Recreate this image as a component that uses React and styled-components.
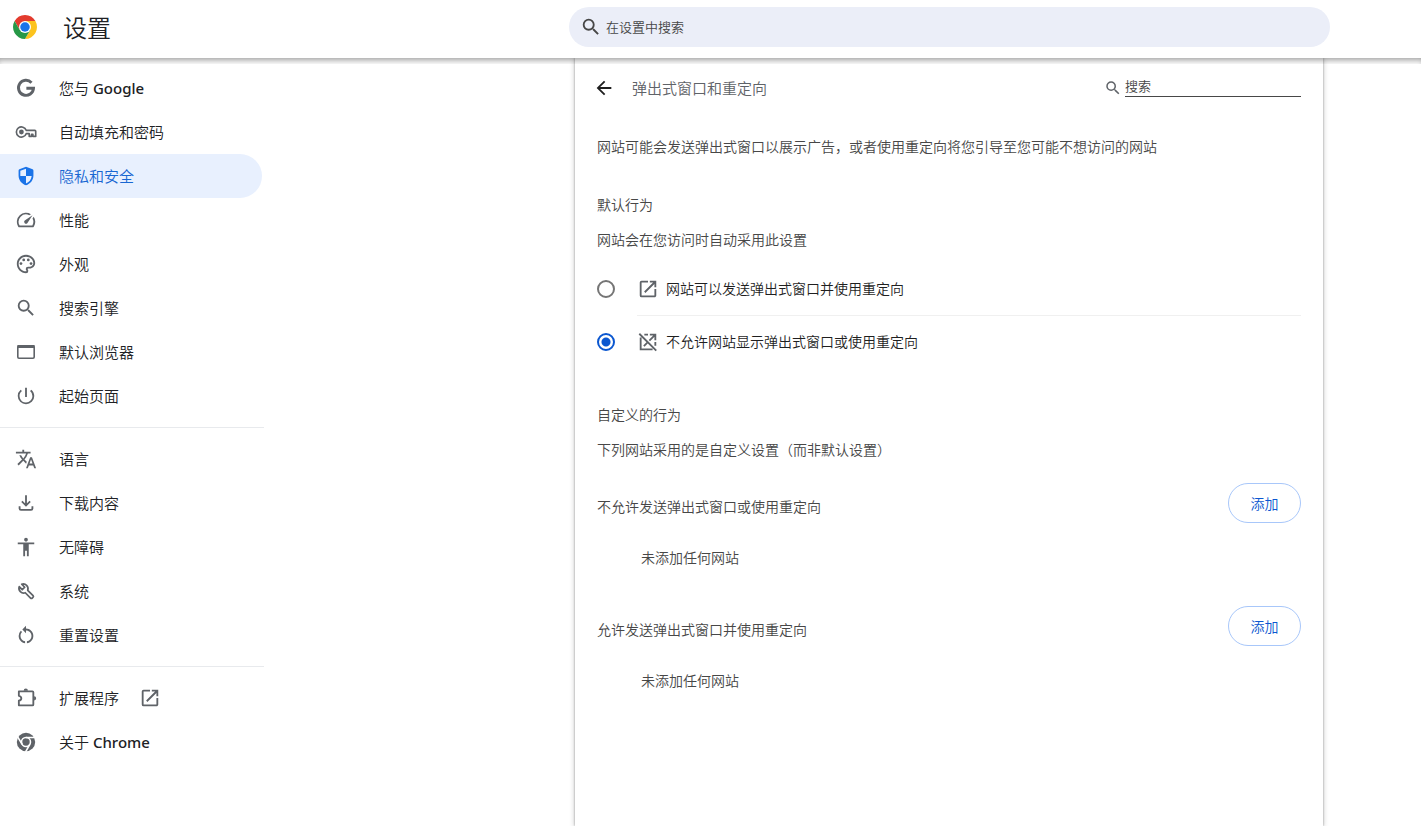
import React, { useState } from 'react';
import { styled, css, createGlobalStyle } from 'styled-components';
import {
  MdAccessibility,
  MdArrowBack,
  MdOpenInNew,
  MdOutlinePalette,
  MdOutlineSpeed,
  MdPowerSettingsNew,
  MdRestartAlt,
  MdSearch,
  MdTranslate
} from 'react-icons/md';

const GoogleIcon = () => (
  <svg viewBox="0 0 24 24" fill="none" stroke="currentColor" strokeWidth="3.2">
    <path d="M18 6.200A8.200 8.200 0 1 0 20.200 12.200H12.400" />
  </svg>
);

const KeyIcon = () => (
  <svg viewBox="0 0 24 24" fill="none" stroke="currentColor" strokeWidth="1.8">
    <path d="M12.200 10.200A5.500 5.500 0 1 0 12.200 13.800H15.500V16.800H18V14.500H19.500V16.800H22.600V11.200a1 1 0 0 0-1-1z" strokeLinejoin="round" />
    <circle cx="7" cy="12" r="2.600" fill="currentColor" stroke="none" />
  </svg>
);

const ShieldIcon = () => (
  <svg viewBox="0 0 24 24" fill="currentColor">
    <path d="M12 2 4.800 4.700A1.500 1.500 0 0 0 3.900 6v5.500c0 4.900 3.400 9.400 8.100 10.600 4.700-1.200 8.100-5.700 8.100-10.600V6a1.500 1.500 0 0 0-.9-1.300zM12 4.100V12h6.200c-.4 3.800-2.900 7-6.200 8.100V12H5.800V6.400z" />
  </svg>
);

const WindowIcon = () => (
  <svg viewBox="0 0 22 22" fill="none" stroke="currentColor">
    <rect x="2.800" y="4.800" width="16.400" height="12.400" rx="1.200" strokeWidth="1.600" />
    <path d="M2.500 5.500h17" strokeWidth="3" />
  </svg>
);

const DownloadIcon = () => (
  <svg viewBox="0 0 24 24" fill="none" stroke="currentColor" strokeWidth="2">
    <path d="M12 3.500v11M7.500 10.300l4.500 4.500 4.500-4.500M5 15.500v2.500a1.500 1.500 0 0 0 1.500 1.500h11a1.500 1.500 0 0 0 1.500-1.500v-2.500" />
  </svg>
);

const WrenchIcon = () => (
  <svg viewBox="0 0 24 24" fill="none" stroke="currentColor" strokeWidth="1.900" strokeLinejoin="round">
    <path d="M7.300 4.600a5.200 5.200 0 0 1 6.600 6.600l5.800 5.800a1.300 1.300 0 0 1 0 1.800l-.9.900a1.300 1.300 0 0 1-1.800 0l-5.800-5.800a5.200 5.200 0 0 1-6.600-6.600l3.300 3.300 2.700-2.700z" />
  </svg>
);

const ExtensionIcon = () => (
  <svg viewBox="0 0 24 24" fill="none" stroke="currentColor" strokeWidth="2">
    <path d="M4.200 4.800H19a1 1 0 0 1 1 1V19a1 1 0 0 1-1 1H4.200v-5c1.700-.4 2.700-1.400 2.700-2.700s-1-2.300-2.700-2.700z" strokeLinejoin="round" />
    <path d="M9.500 4a2.300 2.300 0 0 1 4.600 0zM20.800 10a2.300 2.300 0 0 1 0 4.600z" fill="currentColor" stroke="none" />
  </svg>
);

const ChromeMonoIcon = () => (
  <svg viewBox="0 0 24 24">
    <circle cx="12" cy="12" r="10" fill="currentColor" />
    <circle cx="12" cy="12" r="4.900" fill="none" stroke="#fff" strokeWidth="1.700" />
    <path d="M12 7.100h9.500M7.760 14.450 2.900 6.300M16.240 14.450l-4.700 8.200" stroke="#fff" strokeWidth="1.700" />
  </svg>
);

const ChromeLogo = () => (
  <svg viewBox="0 0 48 48">
    <path d="M24 12h20.790A24 24 0 0 0 3.220 12l10.390 18z" fill="#e33b2e" />
    <path d="M34.390 30 24 48a24 24 0 0 0 20.780-36H24z" fill="#fcc31e" />
    <path d="M13.610 30 3.220 12A24 24 0 0 0 24 48l10.390-18z" fill="#279847" />
    <circle cx="24" cy="24" r="12" fill="#fff" />
    <circle cx="24" cy="24" r="9.500" fill="#1a73e8" />
  </svg>
);

const PopupBlockedIcon = () => (
  <svg viewBox="0 0 24 24" fill="none" stroke="currentColor" strokeWidth="2">
    <path d="M4 7v13h13M8 4h4M20 12v4M14 4h6v6M20 4l-6.500 6.500M11 13l-3.500 3.500M2.500 3l18.500 18.500" />
  </svg>
);

const MENU = [
  [
    { label: '您与', brand: 'Google', Icon: GoogleIcon },
    { label: '自动填充和密码', Icon: KeyIcon },
    { label: '隐私和安全', Icon: ShieldIcon },
    { label: '性能', Icon: MdOutlineSpeed },
    { label: '外观', Icon: MdOutlinePalette },
    { label: '搜索引擎', Icon: MdSearch },
    { label: '默认浏览器', Icon: WindowIcon },
    { label: '起始页面', Icon: MdPowerSettingsNew }
  ],
  [
    { label: '语言', Icon: MdTranslate },
    { label: '下载内容', Icon: DownloadIcon },
    { label: '无障碍', Icon: MdAccessibility },
    { label: '系统', Icon: WrenchIcon },
    { label: '重置设置', Icon: MdRestartAlt }
  ],
  [
    { label: '扩展程序', Icon: ExtensionIcon, external: true },
    { label: '关于', brand: 'Chrome', Icon: ChromeMonoIcon }
  ]
];

const OPTIONS = [
  { value: 'allow', label: '网站可以发送弹出式窗口并使用重定向', Icon: MdOpenInNew },
  { value: 'block', label: '不允许网站显示弹出式窗口或使用重定向', Icon: PopupBlockedIcon }
];

const SITE_LISTS = ['不允许发送弹出式窗口或使用重定向', '允许发送弹出式窗口并使用重定向'];

const App = () => {
  const [active, setActive] = useState('隐私和安全');
  const [behavior, setBehavior] = useState('block');

  return (
    <>
      <GlobalStyle />
      <Page>
        <TopBar>
          <Brand>
            <Logo>
              <ChromeLogo />
            </Logo>
            <Title>设置</Title>
          </Brand>
          <SearchBox>
            <Icon>
              <MdSearch />
            </Icon>
            <SearchInput type="search" placeholder="在设置中搜索" aria-label="在设置中搜索" />
          </SearchBox>
          <TopShadow />
        </TopBar>

        <Body>
          <Sidebar>
            {MENU.map((group) => (
              <MenuGroup key={group[0].label}>
                {group.map(({ label, brand, Icon: ItemIcon, external }) => (
                  <MenuItem key={label} href="#" $active={label === active} onClick={() => setActive(label)}>
                    <Icon>
                      <ItemIcon />
                    </Icon>
                    <MenuLabel>
                      {label}
                      {brand && <BrandName> {brand}</BrandName>}
                    </MenuLabel>
                    {external && (
                      <Icon>
                        <MdOpenInNew />
                      </Icon>
                    )}
                  </MenuItem>
                ))}
              </MenuGroup>
            ))}
          </Sidebar>

          <Panel>
            <PanelHeader>
              <BackButton type="button" aria-label="返回">
                <MdArrowBack />
              </BackButton>
              <PanelTitle>弹出式窗口和重定向</PanelTitle>
              <FilterBox>
                <Icon $size={18}>
                  <MdSearch />
                </Icon>
                <FilterInput type="search" placeholder="搜索" aria-label="搜索" />
              </FilterBox>
            </PanelHeader>

            <Intro>网站可能会发送弹出式窗口以展示广告，或者使用重定向将您引导至您可能不想访问的网站</Intro>

            <Section>
              <SectionTitle>默认行为</SectionTitle>
              <Text>网站会在您访问时自动采用此设置</Text>
              <Options role="radiogroup" aria-label="默认行为">
                {OPTIONS.map(({ value, label, Icon: OptionIcon }) => (
                  <Option key={value}>
                    <Radio
                      type="radio"
                      name="behavior"
                      value={value}
                      checked={behavior === value}
                      onChange={() => setBehavior(value)}
                    />
                    <OptionBody>
                      <Icon>
                        <OptionIcon />
                      </Icon>
                      {label}
                    </OptionBody>
                  </Option>
                ))}
              </Options>
            </Section>

            <Section>
              <SectionTitle>自定义的行为</SectionTitle>
              <Text>下列网站采用的是自定义设置（而非默认设置）</Text>
              {SITE_LISTS.map((name) => (
                <SiteList key={name}>
                  <SiteListHeader>
                    <SiteListTitle>{name}</SiteListTitle>
                    <AddButton type="button">添加</AddButton>
                  </SiteListHeader>
                  <EmptyText>未添加任何网站</EmptyText>
                </SiteList>
              ))}
            </Section>
          </Panel>
        </Body>
      </Page>
    </>
  );
};

export default App;

const GlobalStyle = createGlobalStyle`
  * {
    box-sizing: border-box;
  }

  body {
    margin: 0;
    background: #fff;
    color: #474747;
    font-family: 'Open Sans', 'Noto Sans CJK SC', sans-serif;
    font-size: 14px;
    font-weight: 350;
    line-height: 22px;
  }

  input, button {
    font-family: inherit;
    font-weight: inherit;
  }
`;

const Page = styled.div`
  min-height: 100vh;
  display: flex;
  flex-direction: column;
`;

const TopBar = styled.header`
  position: relative;
  height: 58px;
  display: grid;
  grid-template-columns: minmax(200px, 569fr) minmax(0, 761px) 91fr;
  align-items: center;
  padding-bottom: 4px;
  background: #fff;
`;

const TopShadow = styled.div`
  position: absolute;
  top: 100%;
  left: 0;
  right: 0;
  height: 6px;
  box-shadow: inset 0 5px 6px -3px rgba(0, 0, 0, 0.4);
  pointer-events: none;
`;

const Brand = styled.div`
  display: flex;
  align-items: center;
  gap: 26px;
  padding-left: 13px;
`;

const Logo = styled.span`
  display: flex;
  width: 24px;
  height: 24px;

  svg {
    width: 100%;
    height: 100%;
  }
`;

const Title = styled.h1`
  margin: 0;
  padding-top: 2px;
  font-size: 24px;
  font-weight: inherit;
  line-height: 32px;
  color: #202124;
`;

const Icon = styled.span`
  display: flex;
  flex-shrink: 0;
  color: #5f6368;

  svg {
    width: ${({ $size = 22 }) => $size}px;
    height: ${({ $size = 22 }) => $size}px;
  }
`;

const SearchBox = styled.label`
  display: flex;
  align-items: center;
  gap: 4px;
  height: 40px;
  padding: 0 20px 0 11px;
  border-radius: 20px;
  background: #ebeef8;

  ${Icon} {
    color: #474747;
  }
`;

const bareInput = css`
  flex: 1;
  min-width: 0;
  padding: 0;
  border: 0;
  outline: 0;
  background: transparent;
  color: #202124;
  font-size: 13px;
  appearance: none;

  &::placeholder {
    color: #474747;
    opacity: 1;
  }
`;

const SearchInput = styled.input`
  ${bareInput}
`;

const Body = styled.div`
  flex: 1;
  display: grid;
  grid-template-columns: minmax(264px, 575fr) minmax(0, 748px) 98fr;
`;

const Sidebar = styled.nav`
  width: 264px;
  padding-top: 8px;
`;

const MenuGroup = styled.div`
  & + & {
    margin-top: 9px;
    padding-top: 9px;
    border-top: 1px solid #e8eaed;
  }
`;

const MenuLabel = styled.span`
  margin: 0 20px 0 22px;
`;

const BrandName = styled.span`
  font-family: 'Noto Sans', 'Open Sans', sans-serif;
  font-weight: 500;
`;

const MenuItem = styled.a`
  display: flex;
  align-items: center;
  height: 44px;
  margin-right: 2px;
  padding-left: 15px;
  border-radius: 0 22px 22px 0;
  color: ${({ $active }) => ($active ? '#1967d2' : '#202124')};
  background: ${({ $active }) => ($active ? '#e8f0fe' : 'transparent')};
  font-size: 15px;
  text-decoration: none;

  ${Icon} {
    color: ${({ $active }) => ($active ? '#1a73e8' : '#5f6368')};
  }
`;

const Panel = styled.main`
  grid-column: 2;
  padding: 0 22px 40px;
  background: #fff;
  box-shadow: 0 0 2px rgba(0, 0, 0, 0.35), 0 0 5px 1px rgba(0, 0, 0, 0.16);
`;

const PanelHeader = styled.div`
  display: flex;
  align-items: center;
  height: 60px;
`;

const BackButton = styled.button`
  display: flex;
  margin: 0 17px 0 -4px;
  padding: 0;
  border: 0;
  background: none;
  color: #1f1f1f;
  cursor: pointer;

  svg {
    width: 22px;
    height: 22px;
  }
`;

const PanelTitle = styled.h2`
  flex: 1;
  margin: 0;
  font-size: 15px;
  font-weight: inherit;
  color: #5f6368;
`;

const FilterBox = styled.label`
  display: flex;
  align-items: center;
  gap: 3px;
`;

const FilterInput = styled.input`
  ${bareInput}
  flex: none;
  width: 176px;
  height: 22px;
  margin-bottom: 4px;
  border-bottom: 1px solid #474747;
`;

const Intro = styled.p`
  margin: 18px 0 0;
`;

const Section = styled.section`
  margin-top: 36px;
`;

const SectionTitle = styled.h3`
  margin: 0 0 13px;
  font-size: 14px;
  font-weight: inherit;
`;

const Text = styled.p`
  margin: 0;
`;

const Options = styled.div`
  margin-top: 12px;
`;

const OptionBody = styled.span`
  flex: 1;
  display: flex;
  align-items: center;
  gap: 7px;
  height: 52px;
`;

const Option = styled.label`
  display: flex;
  align-items: center;
  gap: 22px;
  color: #1f1f1f;
  cursor: pointer;

  & + & ${OptionBody} {
    height: 53px;
    border-top: 1px solid #f0f0f0;
  }
`;

const Radio = styled.input`
  appearance: none;
  width: 18px;
  height: 18px;
  margin: 0;
  border: 2px solid #757575;
  border-radius: 50%;

  &:checked {
    border-color: #0b57d0;
    background: radial-gradient(circle, #0b57d0 4px, transparent 5px);
  }
`;

const SiteList = styled.div`
  margin-top: 22px;

  & + & {
    margin-top: 37px;
  }
`;

const SiteListHeader = styled.div`
  display: flex;
  align-items: center;
  justify-content: space-between;
`;

const SiteListTitle = styled.h4`
  margin: 0;
  padding-top: 8px;
  font-size: 14px;
  font-weight: inherit;
`;

const AddButton = styled.button`
  min-width: 73px;
  height: 40px;
  padding: 0 20px;
  border: 1px solid #a8c7fa;
  border-radius: 20px;
  background: #fff;
  color: #0b57d0;
  font-size: 14px;
  cursor: pointer;
`;

const EmptyText = styled.p`
  margin: 24px 0 0;
  padding-left: 44px;
`;
